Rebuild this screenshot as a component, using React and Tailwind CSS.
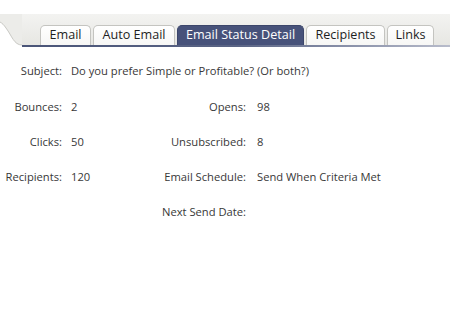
import React from "react";

const tabs = [
  { label: "Email", w: "w-[51px]" },
  { label: "Auto Email", w: "w-[82px]" },
  { label: "Email Status Detail", w: "w-[127px]", active: true },
  { label: "Recipients", w: "w-[79px]" },
  { label: "Links", w: "w-[47px]" },
];

function TabStrip() {
  return (
    <div className="flex h-[33px] mt-[14px]">
      <svg width="22" height="33" viewBox="0 0 22 33" className="shrink-0">
        <path d="M0 0 H22 V31 C14 31 12 22 6 14 C4 11 2 9 0 8 Z" fill="#ecece9" />
        <path d="M22 31 C14 31 12 22 6 14 C4 11 2 9 0 8" fill="none" stroke="#c9c9c4" strokeWidth="1" />
      </svg>
      <div className="flex-1 flex flex-col bg-gradient-to-b from-[#f3f3f1] to-[#e6e6e2]">
        <div className="flex-1 flex items-end gap-[2px] pl-[18px] text-[12.6px]">
          {tabs.map((t) => (
            <div
              key={t.label}
              className={
                t.active
                  ? `${t.w} h-[20px] rounded-t-[5px] bg-[#47527a] border border-[#3c466b] border-b-0 text-white flex items-center justify-center`
                  : `${t.w} h-[20px] rounded-t-[5px] bg-gradient-to-b from-white to-[#f7f7f5] border border-[#c4c4c0] border-b-0 text-[#1e1e1e] flex items-center justify-center`
              }
            >
              {t.label}
            </div>
          ))}
        </div>
        <div className="h-[2px] bg-gradient-to-r from-[#4a5578] via-[#5a6485] to-[#b8bccb]" />
      </div>
    </div>
  );
}

function Label({ children }) {
  return <div className="text-right pr-[9px] whitespace-nowrap">{children}</div>;
}

function Label2({ children }) {
  return <div className="text-right pr-[11px] whitespace-nowrap">{children}</div>;
}

export default function App() {
  return (
    <div
      className="w-[450px] h-[330px] bg-white text-[11.2px] text-[#383838] overflow-hidden"
      style={{ fontFamily: '"Open Sans", "Noto Sans", sans-serif' }}
    >
      <TabStrip />
      <div className="grid grid-cols-[71px_60px_126px_1fr] auto-rows-[35.3px] items-center mt-[7px]">
        <Label>Subject:</Label>
        <div className="col-span-3 whitespace-nowrap">Do you prefer Simple or Profitable? (Or both?)</div>

        <Label>Bounces:</Label>
        <div>2</div>
        <Label2>Opens:</Label2>
        <div>98</div>

        <Label>Clicks:</Label>
        <div>50</div>
        <Label2>Unsubscribed:</Label2>
        <div>8</div>

        <Label>Recipients:</Label>
        <div>120</div>
        <Label2>Email Schedule:</Label2>
        <div className="whitespace-nowrap">Send When Criteria Met</div>

        <div />
        <div />
        <Label2>Next Send Date:</Label2>
        <div />
      </div>
    </div>
  );
}
